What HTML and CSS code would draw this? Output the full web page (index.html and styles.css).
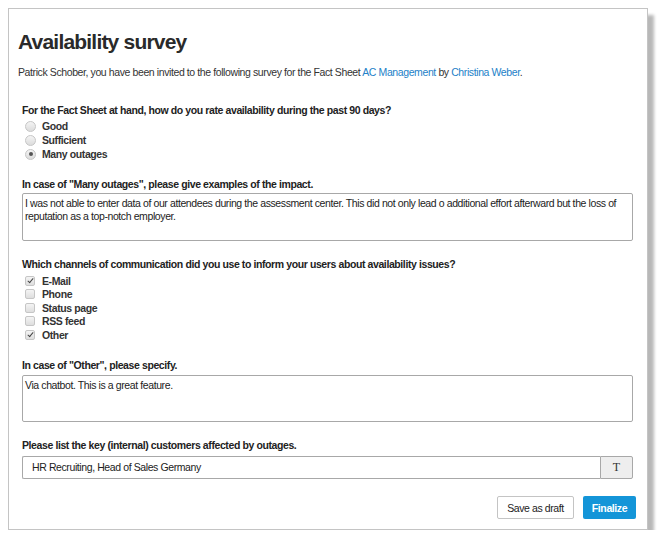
FILE: index.html
```html
<!DOCTYPE html>
<html>
<head>
<meta charset="utf-8">
<link rel="stylesheet" href="styles.css">
</head>
<body>
<div class="card">
  <h1 class="title">Availability survey</h1>
  <p class="intro">Patrick Schober, you have been invited to the following survey for the Fact Sheet <a class="link">AC Management</a> by <a class="link">Christina Weber</a>.</p>
  <div class="questions">
    <div class="q q-first">
      <div class="qlabel">For the Fact Sheet at hand, how do you rate availability during the past 90 days?</div>
      <div class="opts">
        <div class="opt"><span class="radio"></span><span class="otext">Good</span></div>
        <div class="opt"><span class="radio"></span><span class="otext">Sufficient</span></div>
        <div class="opt"><span class="radio checked"></span><span class="otext">Many outages</span></div>
      </div>
    </div>
    <div class="q">
      <div class="qlabel">In case of "Many outages", please give examples of the impact.</div>
      <div class="area">I was not able to enter data of our attendees during the assessment center. This did not only lead o additional effort afterward but the loss of reputation as a top-notch employer.</div>
    </div>
    <div class="q">
      <div class="qlabel">Which channels of communication did you use to inform your users about availability issues?</div>
      <div class="opts opts-cb">
        <div class="opt"><span class="cb checked"></span><span class="otext">E-Mail</span></div>
        <div class="opt"><span class="cb"></span><span class="otext">Phone</span></div>
        <div class="opt"><span class="cb"></span><span class="otext">Status page</span></div>
        <div class="opt"><span class="cb"></span><span class="otext">RSS feed</span></div>
        <div class="opt"><span class="cb checked"></span><span class="otext">Other</span></div>
      </div>
    </div>
    <div class="q">
      <div class="qlabel">In case of "Other", please specify.</div>
      <div class="area area-short">Via chatbot. This is a great feature.</div>
    </div>
    <div class="q">
      <div class="qlabel">Please list the key (internal) customers affected by outages.</div>
      <div class="inputrow">
        <div class="input">HR Recruiting, Head of Sales Germany</div>
        <div class="tbtn">T</div>
      </div>
    </div>
  </div>
  <div class="actions">
    <div class="btn btn-draft">Save as draft</div>
    <div class="btn btn-final">Finalize</div>
  </div>
</div>
</body>
</html>
```
FILE: styles.css
```css
html, body {
  margin: 0;
  padding: 0;
  background: #fff;
}
body {
  font-family: "Liberation Sans", Arial, sans-serif;
  font-size: 10.5px;
  letter-spacing: -0.4px;
  color: #333;
}
.card {
  margin: 8px 0 0 8px;
  width: 640px;
  height: 522px;
  box-sizing: border-box;
  border: 1px solid #c4c4c4;
  box-shadow: 6px 7px 3px rgba(0, 0, 0, 0.28);
  padding: 20px 10px 9px 9px;
  display: flex;
  flex-direction: column;
  background: #fff;
}
.title {
  margin: 0;
  font-size: 21px;
  letter-spacing: -0.8px;
  line-height: 26px;
  font-weight: bold;
  color: #2a2a2a;
}
.intro {
  margin: 10px 0 0 0;
  line-height: 14px;
  color: #333;
}
.link {
  color: #2381c8;
}
.questions {
  padding: 0 4px;
  display: flex;
  flex-direction: column;
}
.q {
  margin-top: 16px;
}
.q-first {
  margin-top: 24px;
}
.qlabel {
  font-weight: bold;
  line-height: 14px;
  color: #222;
}
.opts {
  margin-top: 2px;
  display: flex;
  flex-direction: column;
}
.opts-cb {
  margin-top: 3px;
}
.opts-cb .opt {
  height: 13.5px;
}
.opt {
  height: 14px;
  display: flex;
  align-items: center;
}
.otext {
  font-weight: bold;
  color: #333;
  margin-left: 6px;
}
.radio {
  width: 9px;
  height: 9px;
  margin-left: 3px;
  border-radius: 50%;
  border: 1px solid #c6c6c6;
  background: linear-gradient(#f4f4f4, #dcdcdc);
  box-sizing: content-box;
  position: relative;
}
.radio.checked::after {
  content: "";
  position: absolute;
  left: 2.5px;
  top: 2.5px;
  width: 4px;
  height: 4px;
  border-radius: 50%;
  background: #555;
}
.cb {
  width: 8px;
  height: 8px;
  margin-left: 3px;
  margin-right: 1px;
  border-radius: 2px;
  border: 1px solid #c6c6c6;
  background: linear-gradient(#f4f4f4, #dedede);
  position: relative;
  box-sizing: content-box;
}
.cb.checked::after {
  content: "";
  position: absolute;
  left: 3px;
  top: 0px;
  width: 2px;
  height: 5px;
  border-right: 1.5px solid #444;
  border-bottom: 1.5px solid #444;
  transform: rotate(40deg);
}
.area {
  margin-top: 2px;
  height: 48px;
  box-sizing: border-box;
  border: 1px solid #a8a8a8;
  border-radius: 2px;
  padding: 3px 2px;
  line-height: 13px;
  color: #222;
}
.area-short {
  margin-top: 3px;
  height: 47px;
}
.inputrow {
  margin-top: 4px;
  display: flex;
  height: 23px;
}
.input {
  flex: 1;
  box-sizing: border-box;
  border: 1px solid #a8a8a8;
  border-right: none;
  border-radius: 2px 0 0 2px;
  padding: 0 9px;
  display: flex;
  align-items: center;
  color: #222;
}
.tbtn {
  width: 33px;
  box-sizing: border-box;
  border: 1px solid #a8a8a8;
  border-radius: 0 2px 2px 0;
  background: #eeeeee;
  display: flex;
  align-items: center;
  justify-content: center;
  font-family: "Liberation Serif", serif;
  font-size: 12px;
  letter-spacing: 0;
  color: #333;
}
.actions {
  margin-top: auto;
  display: flex;
  justify-content: flex-end;
  gap: 9px;
  padding-right: 1px;
  padding-bottom: 1px;
}
.btn {
  height: 23px;
  box-sizing: border-box;
  border-radius: 2px;
  display: flex;
  align-items: center;
  justify-content: center;
}
.btn-draft {
  width: 77px;
  border: 1px solid #c4c4c4;
  background: #fff;
  color: #222;
}
.btn-final {
  width: 53px;
  background: #1495d8;
  color: #fff;
  font-weight: bold;
}
```
